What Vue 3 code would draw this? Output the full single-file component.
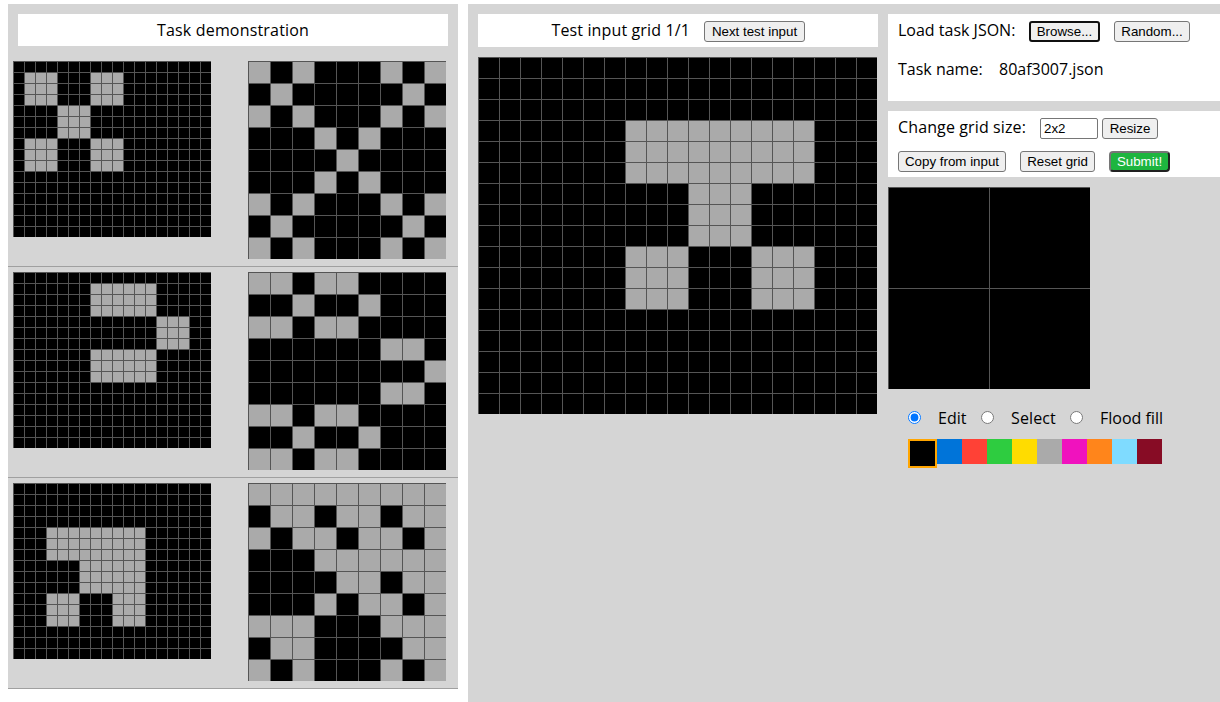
<script setup>
import { ref } from 'vue'

const palette = ['#000000', '#0074d9', '#ff4136', '#2ecc40', '#ffdc00', '#aaaaaa', '#f012be', '#ff851b', '#7fdbff', '#870c25']
const GRAY = 5

// Places a 3x3 block pattern, enlarged three times, on a black board.
function place(pattern, rows, cols, top, left) {
  return Array.from({ length: rows * cols }, (_, i) => {
    const r = Math.floor(i / cols) - top
    const c = (i % cols) - left
    if (r < 0 || c < 0 || r > 8 || c > 8) return 0
    return pattern[Math.floor(r / 3)][Math.floor(c / 3)] === '1' ? GRAY : 0
  })
}

// Repeats the pattern inside each of its own filled blocks.
function nest(pattern) {
  return Array.from({ length: 81 }, (_, i) => {
    const r = Math.floor(i / 9)
    const c = i % 9
    const outer = pattern[Math.floor(r / 3)][Math.floor(c / 3)]
    return outer === '1' && pattern[r % 3][c % 3] === '1' ? GRAY : 0
  })
}

const pairs = [
  { pattern: ['101', '010', '101'], top: 1, left: 1 },
  { pattern: ['110', '001', '110'], top: 1, left: 7 },
  { pattern: ['111', '011', '101'], top: 4, left: 3 }
].map((p) => ({ input: place(p.pattern, 16, 18, p.top, p.left), output: nest(p.pattern) }))

const testInput = place(['111', '010', '101'], 17, 19, 3, 7)
const answer = ref([0, 0, 0, 0])
const size = ref('2x2')
const mode = ref('edit')
const selected = ref(0)

function paint(i) {
  if (mode.value === 'edit') answer.value[i] = selected.value
}
</script>

<template>
  <div class="workspace">
    <section class="demo">
      <div class="title demo-title">Task demonstration</div>
      <div class="pairs">
        <div v-for="(pair, p) in pairs" :key="p" class="pair">
          <div class="board board-in">
            <i v-for="(v, i) in pair.input" :key="i" :class="{ gray: v }"></i>
          </div>
          <div class="board board-out">
            <i v-for="(v, i) in pair.output" :key="i" :class="{ gray: v }"></i>
          </div>
        </div>
      </div>
    </section>

    <section class="evaluation">
      <div class="test">
        <div class="title test-title">
          <span>Test input grid 1/1</span>
          <button class="next">Next test input</button>
        </div>
        <div class="board board-test">
          <i v-for="(v, i) in testInput" :key="i" :class="{ gray: v }"></i>
        </div>
      </div>

      <div class="editor">
        <div class="box load">
          <div class="line">
            <span class="load-label">Load task JSON:</span>
            <button class="browse">Browse...</button>
            <button class="random">Random...</button>
          </div>
          <div class="line name-line">
            <span class="name-label">Task name:</span>
            <span>80af3007.json</span>
          </div>
        </div>

        <div class="box resize">
          <div class="line">
            <span class="size-label">Change grid size:</span>
            <input v-model="size" class="size" type="text" />
            <button class="resize-btn">Resize</button>
          </div>
          <div class="line actions">
            <button class="copy">Copy from input</button>
            <button class="reset">Reset grid</button>
            <button class="submit">Submit!</button>
          </div>
        </div>

        <div class="board board-answer">
          <i v-for="(v, i) in answer" :key="i" :style="{ backgroundColor: palette[v] }" @click="paint(i)"></i>
        </div>

        <div class="modes">
          <label class="edit"><input v-model="mode" type="radio" value="edit" /><span>Edit</span></label>
          <label class="select"><input v-model="mode" type="radio" value="select" /><span>Select</span></label>
          <label><input v-model="mode" type="radio" value="fill" /><span>Flood fill</span></label>
        </div>

        <div class="palette">
          <div
            v-for="(color, i) in palette"
            :key="color"
            class="swatch"
            :class="{ chosen: i === selected }"
            :style="{ backgroundColor: color }"
            @click="selected = i"
          ></div>
        </div>
      </div>
    </section>
  </div>
</template>

<style>
body {
  background: #fff;
  overflow: hidden;
}
</style>

<style scoped>
.workspace {
  box-sizing: border-box;
  width: 1220px;
  height: 702px;
  padding: 4px 0 0 8px;
  display: flex;
  align-items: flex-start;
  gap: 10px;
  overflow: hidden;
  font: 16px/22px "Open Sans", sans-serif;
  color: #000;
}
.demo {
  width: 450px;
  flex: none;
  padding-top: 10px;
  background: #d5d5d5;
}
.title {
  box-sizing: border-box;
  background: #fff;
  padding-top: 5px;
}
.demo-title {
  height: 32px;
  margin: 0 10px;
  text-align: center;
  letter-spacing: 0.18px;
}
.pairs {
  padding-top: 10px;
}
.pair {
  box-sizing: border-box;
  height: 211px;
  padding: 5px 5px 0;
  border-bottom: 1px solid #a0a0a0;
  display: flex;
  align-items: flex-start;
  gap: 37px;
}
.board {
  display: grid;
  flex: none;
}
.board i {
  box-sizing: border-box;
  background: #000;
  border: solid #555;
  border-width: 1px 0 0 1px;
}
.board i.gray {
  background: #aaa;
}
.board-in {
  grid-template-columns: repeat(18, 11px);
  grid-auto-rows: 11px;
}
.board-out {
  grid-template-columns: repeat(9, 22px);
  grid-auto-rows: 22px;
}
.board-test {
  grid-template-columns: repeat(19, 21px);
  grid-auto-rows: 21px;
}
.board-answer {
  grid-template-columns: repeat(2, 101px);
  grid-auto-rows: 101px;
}
.evaluation {
  box-sizing: border-box;
  width: 752px;
  height: 698px;
  flex: none;
  padding: 10px 0 0 10px;
  background: #d5d5d5;
  display: flex;
  gap: 10px;
}
.test {
  width: 400px;
  flex: none;
}
.test-title {
  height: 33px;
  margin-bottom: 10px;
  display: flex;
  align-items: flex-start;
  padding-left: 73.5px;
  white-space: nowrap;
}
.test-title span {
  width: 152.5px;
  letter-spacing: 0.13px;
}
button {
  box-sizing: border-box;
  height: 21px;
  margin: 2px 0 0;
  padding: 0;
  border: 1px solid #767676;
  border-radius: 3px;
  background: #efefef;
  color: #000;
  font: 13.3333px "Liberation Sans", Arial, sans-serif;
  text-align: center;
  white-space: nowrap;
  flex: none;
}
.next {
  width: 101px;
}
.editor {
  flex: 1;
  min-width: 0;
}
.box {
  box-sizing: border-box;
  background: #fff;
  padding: 5px 10px 0;
  margin-bottom: 10px;
}
.load {
  height: 87px;
}
.resize {
  height: 66px;
}
.line {
  display: flex;
  align-items: flex-start;
  white-space: nowrap;
}
.line span {
  flex: none;
}
.load-label {
  width: 131px;
}
.browse {
  width: 71px;
  margin-right: 14px;
  border: 2px solid #101010;
}
.random {
  width: 76px;
}
.name-line {
  margin-top: 16px;
}
.name-label {
  width: 101px;
}
.size-label {
  width: 142px;
  letter-spacing: 0.12px;
}
.size {
  box-sizing: border-box;
  width: 58px;
  height: 21px;
  margin: 2px 4px 0 0;
  padding: 0 3px;
  border: 1px solid #767676;
  border-radius: 2px;
  background: #fff;
  color: #000;
  font: 13.3333px "Liberation Sans", Arial, sans-serif;
}
.resize-btn {
  width: 56px;
}
.actions {
  margin-top: 10px;
  gap: 14px;
}
.copy {
  width: 108px;
}
.reset {
  width: 75px;
}
.submit {
  width: 61px;
  border: 2px solid;
  border-color: #767676 #212121 #212121 #767676;
  border-radius: 4px;
  background: #1eb53f;
  color: #fff;
}
.modes {
  display: flex;
  margin: 18px 0 0 20px;
  height: 22px;
}
.modes label {
  display: flex;
  align-items: flex-start;
  white-space: nowrap;
}
.modes input {
  width: 13px;
  height: 13px;
  margin: 4px 17px 0 0;
  flex: none;
}
.modes .edit {
  width: 73px;
}
.modes .select {
  width: 89px;
  letter-spacing: 0.12px;
}
.palette {
  display: flex;
  align-items: flex-start;
  margin: 10px 0 0 20px;
}
.swatch {
  width: 25px;
  height: 25px;
}
.chosen {
  border: 2px solid orange;
}
</style>
